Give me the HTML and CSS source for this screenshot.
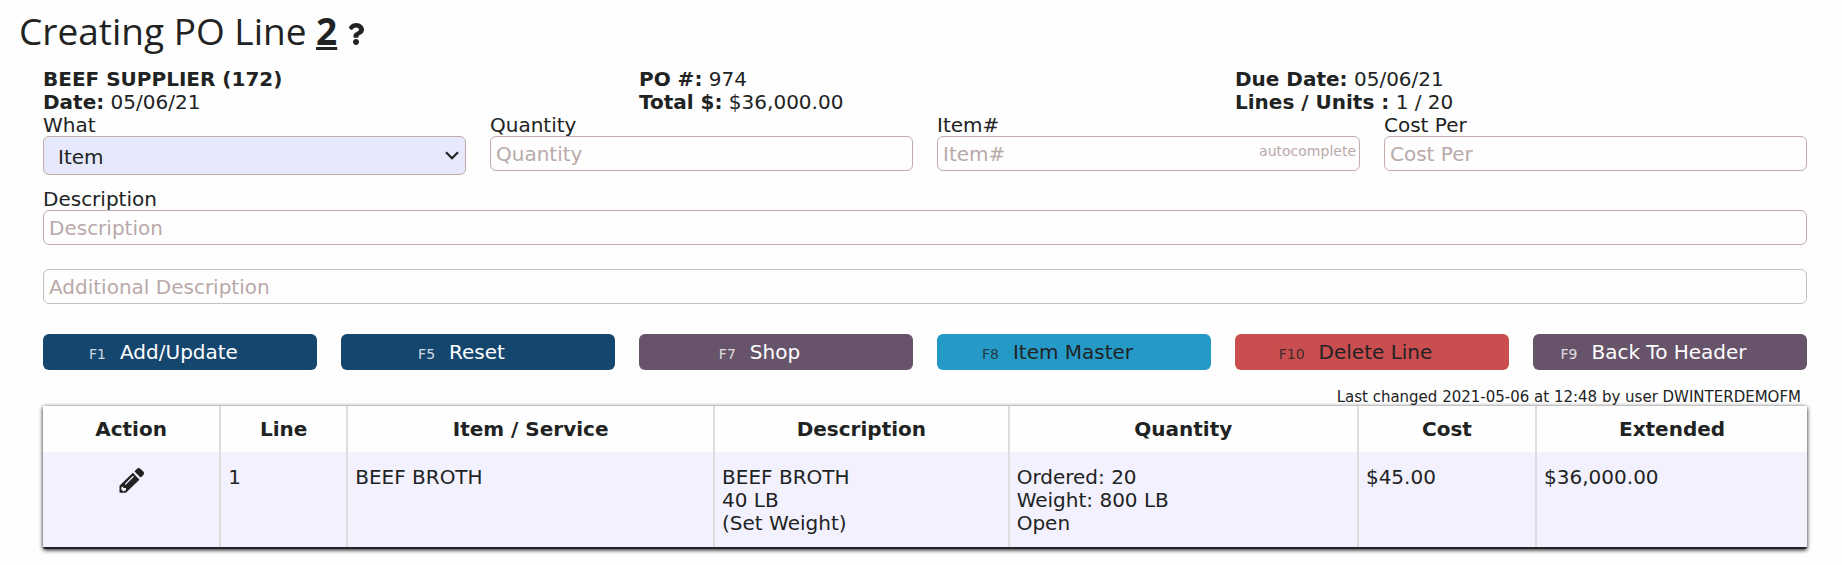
FILE: index.html
```html
<!DOCTYPE html>
<html lang="en">
<head>
<meta charset="utf-8">
<title>Creating PO Line 2</title>
<link rel="stylesheet" href="styles.css">
</head>
<body>
<main class="page">
  <h1 class="title">Creating PO Line <b class="line-no">2</b>
    <a class="help" href="#" aria-label="Help"><svg class="help-icon" viewBox="0 0 384 512" aria-hidden="true"><path fill="currentColor" d="M202.021 0C122.202 0 70.503 32.703 29.914 91.026c-7.363 10.58-5.093 25.086 5.178 32.874l43.138 32.709c10.373 7.865 25.132 6.026 33.253-4.148 25.049-31.381 43.63-49.449 82.757-49.449 30.764 0 68.816 19.799 68.816 49.631 0 22.552-18.617 34.134-48.993 51.164-35.423 19.86-82.299 44.576-82.299 106.405V320c0 13.255 10.745 24 24 24h72.471c13.255 0 24-10.745 24-24v-5.773c0-42.86 125.268-44.645 125.268-160.627C377.504 66.256 286.902 0 202.021 0zM192 373.459c-38.196 0-69.271 31.075-69.271 69.271 0 38.195 31.075 69.27 69.271 69.27s69.271-31.075 69.271-69.271-31.075-69.27-69.271-69.27z"/></svg></a>
  </h1>

  <section class="content">
    <div class="grid thirds">
      <div><b>BEEF SUPPLIER (172)</b><br><b>Date:</b> 05/06/21</div>
      <div><b>PO #:</b> 974<br><b>Total $:</b> $36,000.00</div>
      <div><b>Due Date:</b> 05/06/21<br><b>Lines / Units :</b> 1 / 20</div>
    </div>

    <form class="form">
      <div class="grid quarters">
        <div class="field">
          <label for="what">What</label>
          <div class="select-wrap">
            <select class="control select" id="what"><option>Item</option></select>
            <svg class="chevron" viewBox="0 0 14 9" aria-hidden="true"><path d="M1 1.2l6 6 6-6" fill="none" stroke="currentColor" stroke-width="2.2"/></svg>
          </div>
        </div>
        <div class="field">
          <label for="qty">Quantity</label>
          <input class="control" id="qty" type="text" placeholder="Quantity">
        </div>
        <div class="field">
          <label for="item">Item#</label>
          <div class="auto-wrap">
            <input class="control" id="item" type="text" placeholder="Item#">
            <span class="auto-hint">autocomplete</span>
          </div>
        </div>
        <div class="field">
          <label for="cost">Cost Per</label>
          <input class="control" id="cost" type="text" placeholder="Cost Per">
        </div>
      </div>
      <div class="field description">
        <label for="desc">Description</label>
        <input class="control" id="desc" type="text" placeholder="Description">
      </div>
      <input class="control additional" type="text" placeholder="Additional Description" aria-label="Additional Description">

      <div class="grid sixths">
        <button class="btn primary" type="button"><span class="key">F1</span>Add/Update</button>
        <button class="btn primary" type="button"><span class="key">F5</span>Reset</button>
        <button class="btn secondary" type="button"><span class="key">F7</span>Shop</button>
        <button class="btn info" type="button"><span class="key">F8</span>Item Master</button>
        <button class="btn danger" type="button"><span class="key">F10</span>Delete Line</button>
        <button class="btn secondary" type="button"><span class="key">F9</span>Back To Header</button>
      </div>
    </form>

    <p class="changed">Last changed 2021-05-06 at 12:48 by user DWINTERDEMOFM</p>

    <div class="lines-card">
      <table class="lines">
        <colgroup>
          <col class="c-action"><col class="c-line"><col class="c-item"><col class="c-desc"><col class="c-qty"><col class="c-cost"><col>
        </colgroup>
        <thead>
          <tr><th>Action</th><th>Line</th><th>Item / Service</th><th>Description</th><th>Quantity</th><th>Cost</th><th>Extended</th></tr>
        </thead>
        <tbody>
          <tr>
            <td class="action"><button class="edit" type="button" aria-label="Edit line 1"><svg class="edit-icon" viewBox="0 0 512 512" aria-hidden="true"><path fill="currentColor" d="M497.900 142.100l-46.100 46.100c-4.700 4.700-12.300 4.700-17 0l-111-111c-4.700-4.700-4.700-12.300 0-17l46.100-46.100c18.700-18.700 49.100-18.700 67.900 0l60.100 60.100c18.800 18.700 18.800 49.100 0 67.900zM284.200 99.800L10 366V494Q10 506 22 506H142L412.300 245.100c4.700-4.700 4.700-12.300 0-17l-111-111c-4.800-4.700-12.400-17.400-17.100-17.300zM124.100 339.900c-5.500-5.500-5.500-14.300 0-19.800l154-154c5.500-5.500 14.300-5.500 19.800 0s5.500 14.300 0 19.800l-154 154c-5.500 5.500-14.300 5.500-19.800 0zM88 408h56v44l-50 30-50-48 8-50H88z"/></svg></button></td>
            <td>1</td>
            <td>BEEF BROTH</td>
            <td>BEEF BROTH<br>40 LB<br>(Set Weight)</td>
            <td>Ordered: 20<br>Weight: 800 LB<br>Open</td>
            <td>$45.00</td>
            <td>$36,000.00</td>
          </tr>
        </tbody>
      </table>
    </div>
  </section>
</main>
</body>
</html>
```
FILE: styles.css
```css
* { box-sizing: border-box; }

body {
  margin: 0;
  background: #fefefe;
  color: #212323;
  font: 20px/23px Verdana, "DejaVu Sans", sans-serif;
}

.page { padding: 2px 19px 24px; }

.title {
  margin: 0 0 9px;
  font: 400 37px/57px "Segoe UI", "Open Sans", sans-serif;
}
.line-no { font-weight: 700; text-decoration: underline; }
.help { color: inherit; }
.help-icon { width: 18px; height: 22px; }

.content { padding: 0 16px 0 24px; }

.grid { display: grid; column-gap: 24px; }
.thirds { grid-template-columns: repeat(3, 1fr); }
.quarters { grid-template-columns: repeat(4, 1fr); align-items: start; }
.sixths { grid-template-columns: repeat(6, 1fr); }

.field label { display: block; height: 22px; }
.description { margin-top: 13px; }
.additional { margin-top: 24px; }

.control {
  display: block;
  width: 100%;
  height: 35px;
  padding: 0 5px;
  border: 1px solid #c3abab;
  border-radius: 6px;
  background: #fefefe;
  color: inherit;
  font: inherit;
}
.control::placeholder { color: #b9a9a9; opacity: 1; }
.control.additional { border-color: #c2c2c4; }

.select-wrap, .auto-wrap { position: relative; }
.select {
  height: 39px;
  padding: 3px 32px 0 14px;
  appearance: none;
  background: #e6e8fc;
}
.chevron {
  position: absolute;
  top: 15px;
  right: 7px;
  width: 14px;
  height: 9px;
  pointer-events: none;
}
.auto-hint {
  position: absolute;
  top: 4px;
  right: 4px;
  color: #b9a9a9;
  font-size: 14px;
  pointer-events: none;
}

.sixths { margin-top: 30px; }
.btn {
  height: 36px;
  padding: 3px 33px 0 0;
  border: 0;
  border-radius: 6px;
  color: #fefefe;
  font: inherit;
}
.key { margin-right: 14px; font-size: 14px; opacity: 0.8; }
.primary { background: #15466e; }
.secondary { background: #67546a; }
.info { background: #259ac7; color: #212323; }
.danger { background: #ca4d50; color: #212323; }

.changed {
  margin: 18px 6px 0 0;
  font-size: 15px;
  line-height: 18px;
  text-align: right;
}

.lines-card {
  border-bottom: 2px solid #26222c;
  border-radius: 2px;
  box-shadow: 0 1px 4px #111;
}
.lines {
  width: 100%;
  table-layout: fixed;
  border-collapse: separate;
  border-spacing: 0;
}
.c-action { width: 10.1%; }
.c-line { width: 7.2%; }
.c-item { width: 20.8%; }
.c-desc { width: 16.7%; }
.c-qty { width: 19.8%; }
.c-cost { width: 10.1%; }

.lines th, .lines td {
  padding: 12px 7px;
  border-right: 2px solid #dddde0;
  text-align: left;
  vertical-align: top;
}
.lines th { padding: 12px 7px 11px; background: #fefefe; text-align: center; }
.lines td { padding: 14px 7px 12px; background: #f3f1fe; }
.lines th:last-child, .lines td:last-child { border-right: 0; }
.lines .action { text-align: center; }
.edit { padding: 2px 0 0; border: 0; background: none; color: inherit; }
.edit-icon { display: block; width: 25px; height: 25px; }
```
